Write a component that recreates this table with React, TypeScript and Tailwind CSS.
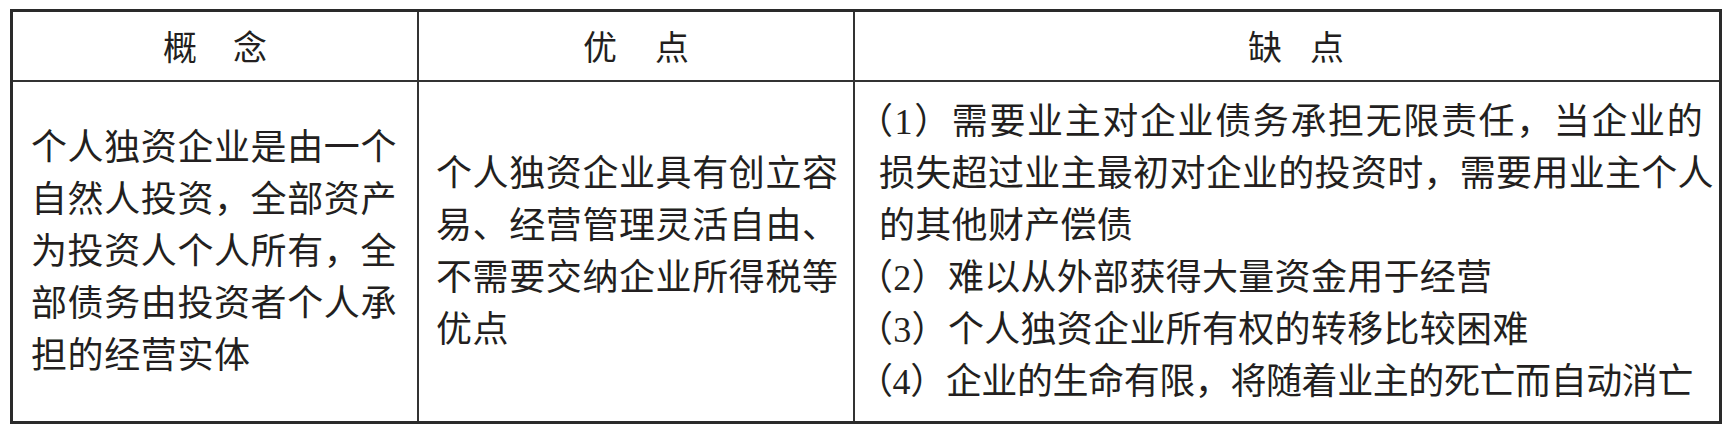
const BODY_FONT = "font-['Liberation_Serif','Noto_Sans_CJK_SC',serif]";

const concept = [
  "个人独资企业是由一个",
  "自然人投资，全部资产",
  "为投资人个人所有，全",
  "部债务由投资者个人承",
  "担的经营实体",
];

const pros = [
  "个人独资企业具有创立容",
  "易、经营管理灵活自由、",
  "不需要交纳企业所得税等",
  "优点",
];

// width: justified lines are stretched/squeezed to the typeset width of the reference
const cons: { text: string; cls: string }[] = [
  { text: "（1）需要业主对企业债务承担无限责任，当企业的", cls: "-ml-[22px] w-[846px] [text-align-last:justify]" },
  { text: "损失超过业主最初对企业的投资时，需要用业主个人", cls: "w-[822px] [text-align-last:justify]" },
  { text: "的其他财产偿债", cls: "" },
  { text: "（2）难以从外部获得大量资金用于经营", cls: "-ml-[22px]" },
  { text: "（3）个人独资企业所有权的转移比较困难", cls: "-ml-[22px]" },
  { text: "（4）企业的生命有限，将随着业主的死亡而自动消亡", cls: "-ml-[22px] w-[835px] tracking-[-1.4px] [text-align-last:justify]" },
];

function HeadCell({ a, b, gap, first }: { a: string; b: string; gap: string; first?: boolean }) {
  return (
    <div
      className={`flex items-center justify-center text-[34px] leading-none text-[#231f20] ${
        first ? "" : "border-l-2 border-[#333]"
      } ${gap}`}
    >
      <span>{a}</span>
      <span>{b}</span>
    </div>
  );
}

function Lines({ lines }: { lines: string[] }) {
  return (
    <div className="flex flex-col">
      {lines.map((l) => (
        <div key={l} className="whitespace-nowrap">
          {l}
        </div>
      ))}
    </div>
  );
}

export default function App() {
  return (
    <div className="h-[437px] w-[1734px] bg-white pl-[10px] pt-[9px]">
      <div className="w-[1712px] border-[3px] border-[#2a2a2a] font-['Noto_Sans_CJK_SC',sans-serif]">
        {/* header */}
        <div className="grid h-[70px] grid-cols-[404px_436px_866px] border-b-2 border-[#333]">
          <HeadCell a="概" b="念" gap="gap-[36px]" first />
          <HeadCell a="优" b="点" gap="gap-[38px]" />
          <HeadCell a="缺" b="点" gap="gap-[28px] pl-[18px]" />
        </div>

        {/* body */}
        <div
          className={`grid h-[339px] grid-cols-[404px_436px_866px] text-[36px] font-normal leading-[52px] text-[#231f20] ${BODY_FONT}`}
        >
          <div className="flex items-center pl-[18px] tracking-[0.6px]">
            <Lines lines={concept} />
          </div>
          <div className="flex items-center border-l-2 border-[#333] pl-[17px] tracking-[0.6px]">
            <Lines lines={pros} />
          </div>
          <div className="flex items-center border-l-2 border-[#333] pl-[24px] tracking-[0.3px]">
            <div className="flex flex-col">
              {cons.map((c) => (
                <div key={c.text} className={`whitespace-nowrap ${c.cls}`}>
                  {c.text}
                </div>
              ))}
            </div>
          </div>
        </div>
      </div>
    </div>
  );
}
